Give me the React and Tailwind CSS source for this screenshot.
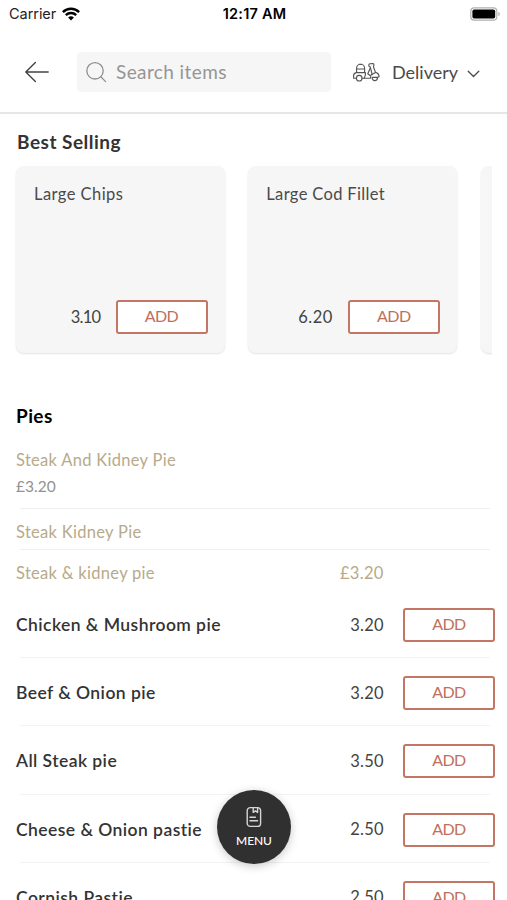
import React from 'react';
import clsx from 'clsx';

const bestSelling = [
    { name: 'Large Chips', price: '3.10', nameClass: 'tracking-[0.45px]', priceClass: 'tracking-[-0.7px]' },
    { name: 'Large Cod Fillet', price: '6.20', nameClass: 'tracking-[0.35px]', priceClass: 'tracking-[0.5px]' },
];

const pies = [
    { name: 'Chicken & Mushroom pie', price: '3.20' },
    { name: 'Beef & Onion pie', price: '3.20' },
    { name: 'All Steak pie', price: '3.50' },
    { name: 'Cheese & Onion pastie', price: '2.50' },
    { name: 'Cornish Pastie', price: '2.50' },
];

function WifiIcon() {
    return (
        <svg className="w-[18px] h-[14px]" viewBox="0 0 18 14" fill="none" stroke="#000" strokeWidth="2.4">
            <path d="M0.9 5.1a11.6 11.6 0 0 1 16.2 0" />
            <path d="M3.8 8.1a7.5 7.5 0 0 1 10.4 0" />
            <path d="M9 13.6 6.1 10.6a4.2 4.2 0 0 1 5.8 0Z" fill="#000" stroke="none" />
        </svg>
    );
}

function BatteryIcon() {
    return (
        <svg className="w-[30px] h-[14px]" viewBox="0 0 30 14" fill="none">
            <rect x="0.8" y="0.8" width="26" height="12.4" rx="3.4" stroke="#b0b0b0" strokeWidth="1.2" />
            <rect x="2.4" y="2.4" width="22.8" height="9.2" rx="1.8" fill="#000" />
            <path d="M28.3 5v4c1-.3 1.5-1.1 1.5-2s-.5-1.7-1.5-2Z" fill="#b0b0b0" />
        </svg>
    );
}

function ScooterIcon() {
    return (
        <svg className="w-[28px] h-[20px]" viewBox="0 0 28 20" fill="none" stroke="#555" strokeWidth="1.15" strokeLinecap="round" strokeLinejoin="round">
            <path d="M4.2 16.2H1.6v-2.4c0-1.6 1-2.8 2.6-3.2h9.2c.4 2-.1 3.8-1.2 5.6h-2" />
            <path d="M4.6 10.4V6.2a4 4 0 0 1 8 0v4.2M4.6 7h8M7 2.4h3" />
            <circle cx="7.2" cy="16.2" r="2.8" />
            <path d="M12.2 16.2h6.2c0-2 .4-3.4 1.6-4.6L18.2 5l-1-.7c-.8-.6-.5-2.5.6-2.6l2.8-.2c1 0 1.5.7 1.3 1.6l-.4 1.9 2 5.4c2.4.7 3.6 2.3 3.6 4.4l-2.6 1" />
            <path d="m18.2 6.2-2.4 5.6 2.6 2M20 12.6l3.5-2" />
            <path d="M20.2 15.4a2.7 2.7 0 1 0 5.3 0Z" />
        </svg>
    );
}

function MenuIcon() {
    return (
        <svg className="w-[16px] h-[22px]" viewBox="0 0 16 22" fill="none" stroke="#d6d6d6" strokeWidth="1.4" strokeLinecap="round" strokeLinejoin="round">
            <rect x="1.2" y="1.6" width="13.4" height="18.8" rx="3.2" />
            <path d="M7.2 1.8v4.6l2.2-1.5 2.2 1.5V1.8" />
            <path d="M4 11.2h5.4M4 14.8h7.6" />
        </svg>
    );
}

function AddButton() {
    return (
        <button className="shrink-0 w-[92px] h-[34px] border-2 border-[#c27663] rounded-[3px] bg-white text-[#c06f5b] text-base leading-none tracking-[-0.6px] pb-[2px]">
            ADD
        </button>
    );
}

function BestSellingCard({ item }) {
    return (
        <div className="shrink-0 w-[209px] h-[187px] flex flex-col justify-between rounded-[8px] bg-[#f6f6f6] shadow-[0_1px_2px_rgba(0,0,0,0.12)] pl-[18px] pr-[17.5px] pt-[17px] pb-[19px]">
            <div className={clsx('text-[16.5px] leading-[22px] text-[#4a4a4a]', item.nameClass)}>{item.name}</div>
            <div className="flex items-center justify-end gap-[15px]">
                <span className={clsx('text-[16.5px] text-[#434343]', item.priceClass)}>{item.price}</span>
                <AddButton />
            </div>
        </div>
    );
}

function PieRow({ item }) {
    return (
        <div className="h-[68.2px] pl-4 pr-3 flex flex-col">
            <div className="flex-1 flex items-center pt-[3px]">
                <span className="flex-1 text-[17.5px] tracking-[0.44px] font-semibold text-[#333]">{item.name}</span>
                <span className="text-[16.5px] tracking-[0.3px] text-[#434343] mr-[19px]">{item.price}</span>
                <AddButton />
            </div>
            <div className="h-px ml-1 mr-[5px] bg-[#f3f3f3]" />
        </div>
    );
}

export default function App() {
    return (
        <div className="relative w-full h-[900px] overflow-hidden bg-white font-['Lato',sans-serif]">
            {/* Status bar */}
            <div className="h-7 grid grid-cols-3 items-center pl-[9px] pr-[7px] font-['Inter',sans-serif] text-black">
                <div className="flex items-center gap-[6px]">
                    <span className="text-[14.5px] text-[#222] tracking-[-0.05px]">Carrier</span>
                    <WifiIcon />
                </div>
                <span className="text-center text-[14.5px] tracking-[0.2px] font-semibold">12:17 AM</span>
                <div className="flex justify-end">
                    <BatteryIcon />
                </div>
            </div>

            {/* Search header */}
            <header className="h-[86px] flex items-center pl-[24px] pt-[4px] border-b-2 border-[#e6e6e6]">
                <svg className="w-[26px] h-[22px]" viewBox="0 0 26 22" fill="none" stroke="#444" strokeWidth="1.4" strokeLinecap="round" strokeLinejoin="round">
                    <path d="M11.4 1.4 1.8 11l9.6 9.6M1.8 11h22.4" />
                </svg>
                <div className="ml-[27px] w-[254px] h-10 flex items-center rounded-[4px] bg-[#f6f6f6] pl-2">
                    <svg className="w-[22px] h-[22px]" viewBox="0 0 22 22" fill="none" stroke="#8f8f8f" strokeWidth="1.3" strokeLinecap="round">
                        <circle cx="10" cy="9.8" r="8.2" />
                        <path d="m15.8 15.8 4.8 4.8" />
                    </svg>
                    <span className="ml-[9px] text-[19px] tracking-[0.4px] text-[#959595]">Search items</span>
                </div>
                <div className="ml-[21px] flex items-center">
                    <ScooterIcon />
                    <span className="ml-[12px] text-[18px] text-[#4a4a4a]">Delivery</span>
                    <svg className="ml-[9px] mt-[3px] w-[13px] h-[8px]" viewBox="0 0 13 8" fill="none" stroke="#4a4a4a" strokeWidth="1.3" strokeLinecap="round" strokeLinejoin="round">
                        <path d="m1.2 1.2 5.3 5.3 5.3-5.3" />
                    </svg>
                </div>
            </header>

            <h2 className="mt-[16px] ml-[17px] text-[19px] tracking-[0.5px] leading-[24px] font-bold text-[#333]">Best Selling</h2>
            <div className="mt-[12px] mr-[15px] pl-4 pb-2 flex gap-[23.3px] overflow-hidden">
                {bestSelling.map((item) => (
                    <BestSellingCard key={item.name} item={item} />
                ))}
                <div className="shrink-0 w-[209px] h-[187px] rounded-[8px] bg-[#f6f6f6] shadow-[0_1px_2px_rgba(0,0,0,0.12)]" />
            </div>

            <h2 className="mt-[43px] ml-4 text-[19px] tracking-[0.4px] leading-[24px] font-bold text-black">Pies</h2>
            <div className="mt-[19px] pl-4 pr-[17px] text-[16.5px] leading-[26px] tracking-[0.3px] text-[#b7aa8a]">
                <div>Steak And Kidney Pie</div>
                <div className="text-[15.5px] tracking-normal text-[#929292]">£3.20</div>
                <div className="mt-[9px] h-px ml-1 bg-[#efefef]" />
                <div className="mt-[10px]">Steak Kidney Pie</div>
                <div className="mt-[4px] h-px ml-1 bg-[#efefef]" />
                <div className="mt-[10px] flex">
                    <span className="w-[324px]">Steak &amp; kidney pie</span>
                    <span>£3.20</span>
                </div>
            </div>
            <div className="mt-[4px]">
                {pies.map((item) => (
                    <PieRow key={item.name} item={item} />
                ))}
            </div>

            {/* Floating menu button */}
            <button className="absolute left-[217px] top-[790px] w-[74px] h-[74px] rounded-full bg-[#303030] shadow-[0_2px_10px_rgba(0,0,0,0.22)] flex flex-col items-center pt-[16px]">
                <MenuIcon />
                <span className="mt-[5px] text-[12px] leading-[16px] tracking-[-0.1px] font-medium text-white">MENU</span>
            </button>
        </div>
    );
}
